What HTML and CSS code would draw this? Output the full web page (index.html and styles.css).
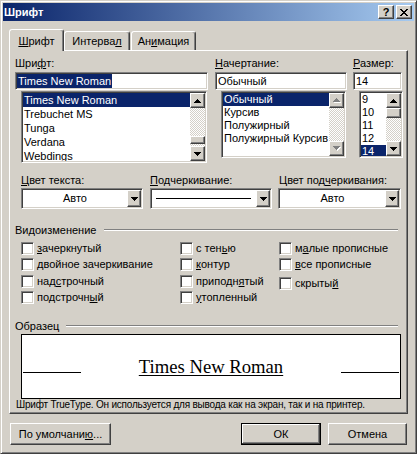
FILE: index.html
```html
<!DOCTYPE html>
<html lang="ru">
<head>
<meta charset="utf-8">
<title>Шрифт</title>
<link rel="stylesheet" href="styles.css">
</head>
<body>
<div class="win">
  <div class="titlebar">
    <span class="title">Шрифт</span>
    <div class="tbtns">
      <span class="tbtn raised">?</span>
      <span class="tbtn raised"><svg width="8" height="7" viewBox="0 0 8 7" shape-rendering="crispEdges"><path d="M0 0h2v1h-2zM6 0h2v1h-2zM1 1h2v1h-2zM5 1h2v1h-2zM2 2h4v1h-4zM3 3h2v1h-2zM2 4h4v1h-4zM1 5h2v1h-2zM5 5h2v1h-2zM0 6h2v1h-2zM6 6h2v1h-2z" fill="#000"/></svg></span>
    </div>
  </div>

  <div class="tabs">
    <div class="tab active"><u>Ш</u>рифт</div>
    <div class="tab t2">Интерва<u>л</u></div>
    <div class="tab t3">Ан<u>и</u>мация</div>
  </div>

  <div class="panel">
    <div class="row1">
      <div class="c1">
        <div class="lbl">Шри<u>ф</u>т:</div>
        <div class="field sunken"><span class="txt hl">Times New Roman</span></div>
        <div class="list sunken list-font">
          <div class="items">
            <div class="item sel">Times New Roman</div>
            <div class="item">Trebuchet MS</div>
            <div class="item">Tunga</div>
            <div class="item">Verdana</div>
            <div class="item">Webdings</div>
          </div>
          <div class="sb">
            <div class="sbtn raised"><svg width="7" height="4" viewBox="0 0 7 4" shape-rendering="crispEdges"><path d="M3 0h1v1h1v1h1v1h1v1h-7v-1h1v-1h1v-1h1z" fill="#000"/></svg></div>
            <div class="track track-end"><div class="thumb raised"></div></div>
            <div class="sbtn raised"><svg width="7" height="4" viewBox="0 0 7 4" shape-rendering="crispEdges"><path d="M0 0h7v1h-1v1h-1v1h-1v1h-1v-1h-1v-1h-1v-1h-1z" fill="#000"/></svg></div>
          </div>
        </div>
      </div>

      <div class="c2">
        <div class="lbl"><u>Н</u>ачертание:</div>
        <div class="field sunken"><span class="txt">Обычный</span></div>
        <div class="list sunken list-small list-style">
          <div class="items">
            <div class="item sel">Обычный</div>
            <div class="item">Курсив</div>
            <div class="item">Полужирный</div>
            <div class="item">Полужирный Курсив</div>
          </div>
          <div class="sb">
            <div class="sbtn raised"><svg width="8" height="5" viewBox="0 0 8 5" shape-rendering="crispEdges"><path d="M4 1h1v1h1v1h1v1h1v1h-7v-1h1v-1h1v-1h1z" fill="#fff"/><path d="M3 0h1v1h1v1h1v1h1v1h-7v-1h1v-1h1v-1h1z" fill="#808080"/></svg></div>
            <div class="track"></div>
            <div class="sbtn raised"><svg width="8" height="5" viewBox="0 0 8 5" shape-rendering="crispEdges"><path d="M1 1h7v1h-1v1h-1v1h-1v1h-1v-1h-1v-1h-1v-1h-1z" fill="#fff"/><path d="M0 0h7v1h-1v1h-1v1h-1v1h-1v-1h-1v-1h-1v-1h-1z" fill="#808080"/></svg></div>
          </div>
        </div>
      </div>

      <div class="c3">
        <div class="lbl"><u>Р</u>азмер:</div>
        <div class="field sunken"><span class="txt">14</span></div>
        <div class="list sunken list-small list-size">
          <div class="items">
            <div class="item">9</div>
            <div class="item">10</div>
            <div class="item">11</div>
            <div class="item">12</div>
            <div class="item sel">14</div>
          </div>
          <div class="sb">
            <div class="sbtn raised"><svg width="7" height="4" viewBox="0 0 7 4" shape-rendering="crispEdges"><path d="M3 0h1v1h1v1h1v1h1v1h-7v-1h1v-1h1v-1h1z" fill="#000"/></svg></div>
            <div class="track"><div class="thumb thumb-top raised"></div></div>
            <div class="sbtn raised"><svg width="7" height="4" viewBox="0 0 7 4" shape-rendering="crispEdges"><path d="M0 0h7v1h-1v1h-1v1h-1v1h-1v-1h-1v-1h-1v-1h-1z" fill="#000"/></svg></div>
          </div>
        </div>
      </div>
    </div>

    <div class="row2">
      <div class="r2c1">
        <div class="lbl"><u>Ц</u>вет текста:</div>
        <div class="combo sunken">
          <div class="val">Авто</div>
          <div class="cbtn raised"><svg width="7" height="4" viewBox="0 0 7 4" shape-rendering="crispEdges"><path d="M0 0h7v1h-1v1h-1v1h-1v1h-1v-1h-1v-1h-1v-1h-1z" fill="#000"/></svg></div>
        </div>
      </div>
      <div class="r2c2">
        <div class="lbl"><u>П</u>одчеркивание:</div>
        <div class="combo sunken">
          <div class="val"><div class="uline"></div></div>
          <div class="cbtn raised"><svg width="7" height="4" viewBox="0 0 7 4" shape-rendering="crispEdges"><path d="M0 0h7v1h-1v1h-1v1h-1v1h-1v-1h-1v-1h-1v-1h-1z" fill="#000"/></svg></div>
        </div>
      </div>
      <div class="r2c3">
        <div class="lbl lbl3">Цвет под<u>ч</u>еркивания:</div>
        <div class="combo sunken">
          <div class="val">Авто</div>
          <div class="cbtn raised"><svg width="7" height="4" viewBox="0 0 7 4" shape-rendering="crispEdges"><path d="M0 0h7v1h-1v1h-1v1h-1v1h-1v-1h-1v-1h-1v-1h-1z" fill="#000"/></svg></div>
        </div>
      </div>
    </div>

    <div class="legend legend-mod"><span>Видоизменение</span><div class="line"></div></div>
    <div class="checks">
      <div class="chk"><span class="cb sunken"></span><span><u>з</u>ачеркнутый</span></div>
      <div class="chk"><span class="cb sunken"></span><span><u>д</u>войное зачеркивание</span></div>
      <div class="chk"><span class="cb sunken"></span><span>над<u>с</u>трочный</span></div>
      <div class="chk"><span class="cb sunken"></span><span>подстрочн<u>ы</u>й</span></div>
      <div class="chk"><span class="cb sunken"></span><span>с тен<u>ь</u>ю</span></div>
      <div class="chk"><span class="cb sunken"></span><span><u>к</u>онтур</span></div>
      <div class="chk"><span class="cb sunken"></span><span>приподн<u>я</u>тый</span></div>
      <div class="chk"><span class="cb sunken"></span><span><u>у</u>топленный</span></div>
      <div class="chk"><span class="cb sunken"></span><span>м<u>а</u>лые прописные</span></div>
      <div class="chk"><span class="cb sunken"></span><span><u>в</u>се прописные</span></div>
      <div class="chk low"><span class="cb sunken"></span><span>скрыты<u>й</u></span></div>
    </div>

    <div class="legend legend-sample"><span>Образец</span><div class="line"></div></div>
    <div class="sample">
      <div class="sline"></div>
      <div class="stext">Times New Roman</div>
      <div class="sline"></div>
    </div>
    <div class="desc">Шрифт TrueType. Он используется для вывода как на экран, так и на принтер.</div>
  </div>

  <div class="btnrow">
    <div class="btn raised b-def">По умолчани<u>ю</u>...</div>
    <div class="btn raised b-ok default">ОК</div>
    <div class="btn raised b-cancel">Отмена</div>
  </div>
</div>
</body>
</html>
```
FILE: styles.css
```css
* { box-sizing: border-box; }
html, body { margin: 0; padding: 0; }
body {
  width: 417px;
  height: 454px;
  overflow: hidden;
  background: #d4d0c8;
  font-family: "Liberation Sans", Arial, sans-serif;
  font-size: 11px;
  line-height: 13px;
  color: #000;
}
u { text-decoration: underline; text-underline-offset: 1px; }

.raised {
  background: #d4d0c8;
  border: 1px solid;
  border-color: #fff #404040 #404040 #fff;
  box-shadow: inset -1px -1px #808080;
}
.sunken {
  background: #fff;
  border: 1px solid;
  border-color: #808080 #fff #fff #808080;
  box-shadow: inset 1px 1px #404040, inset -1px -1px #d4d0c8;
}

.win {
  width: 417px;
  height: 454px;
  border: 1px solid;
  border-color: #d4d0c8 #404040 #404040 #d4d0c8;
  box-shadow: inset 1px 1px #fff, inset -1px -1px #808080;
  padding: 2px;
}

.titlebar {
  height: 18px;
  background: linear-gradient(to right, #0a246a, #a6caf0);
  display: flex;
  align-items: center;
  padding: 0 2px 0 1px;
  color: #fff;
  font-weight: bold;
}
.tbtns { margin-left: auto; display: flex; gap: 2px; }
.tbtn {
  width: 16px;
  height: 14px;
  display: flex;
  align-items: center;
  justify-content: center;
  color: #000;
  font-weight: bold;
  font-size: 11px;
  line-height: 12px;
}

.tabs {
  display: flex;
  align-items: flex-end;
  height: 21px;
  margin: 8px 0 0 6px;
}
.tab {
  height: 19px;
  padding-top: 3px;
  text-align: center;
  border: 1px solid;
  border-bottom: 0;
  border-color: #fff #404040 transparent #fff;
  box-shadow: inset -1px 0 #808080;
  border-radius: 3px 3px 0 0;
  background: #d4d0c8;
}
.tab.active {
  width: 55px;
  height: 22px;
  margin-bottom: -1px;
  padding-top: 5px;
  position: relative;
  z-index: 1;
}
.t2 { width: 66px; }
.t3 { width: 65px; margin-left: 1px; }

.panel {
  margin-left: 6px;
  width: 399px;
  height: 364px;
  border: 1px solid;
  border-color: #fff #404040 #404040 #fff;
  box-shadow: inset -1px -1px #808080;
  padding: 6px 5px 0 5px;
}

.row1 { display: flex; }
.c1 { width: 193px; }
.c2 { width: 132px; margin-left: 7px; }
.c3 { width: 49px; margin-left: 6px; }

.lbl { height: 13px; white-space: nowrap; }
.field {
  height: 18px;
  margin-top: 2px;
  display: flex;
  align-items: center;
  padding-left: 1px;
}
.txt { padding: 0 1px; line-height: 14px; white-space: nowrap; }
.hl { background: #0a246a; color: #fff; }

.list {
  display: flex;
  margin: 1px 1px 0 6px;
  padding: 1px;
  height: 72px;
}
.list-small { height: 67px; }
.list-size { margin-right: -1px; }
.items { flex: 1; min-width: 0; overflow: hidden; }
.item {
  height: 14px;
  line-height: 14px;
  padding-left: 1px;
  white-space: nowrap;
  overflow: hidden;
}
.list-small .item { height: 13px; line-height: 13px; }
.item.sel { background: #0a246a; color: #fff; }

.sb { width: 15px; flex: none; display: flex; flex-direction: column; }
.sbtn {
  height: 15px;
  flex: none;
  display: flex;
  align-items: center;
  justify-content: center;
}
.track {
  flex: 1;
  display: flex;
  flex-direction: column;
  background: repeating-conic-gradient(#fff 0 25%, #d4d0c8 0 50%) 0 0 / 2px 2px;
}
.track-end { justify-content: flex-end; }
.thumb { height: 8px; margin-bottom: 2px; flex: none; }
.thumb-top { height: 10px; margin-bottom: 0; }

.row2 { display: flex; margin: 11px 1px 0 6px; }
.r2c1 { width: 122px; }
.r2c2 { width: 122px; margin-left: 7px; }
.r2c3 { width: 123px; margin-left: 6px; }
.lbl3 { padding-left: 1px; }
.combo {
  height: 21px;
  margin-top: 1px;
  display: flex;
  padding: 1px;
}
.val {
  flex: 1;
  display: flex;
  align-items: center;
  justify-content: center;
}
.uline { flex: 1; height: 1px; background: #000; margin: 0 5px 0 4px; }
.cbtn {
  width: 14px;
  height: 17px;
  flex: none;
  display: flex;
  align-items: center;
  justify-content: center;
}

.legend { display: flex; align-items: center; height: 13px; }
.legend .line {
  flex: 1;
  height: 2px;
  border-top: 1px solid #808080;
  border-bottom: 1px solid #fff;
  margin: -1px 4px 0 8px;
}
.legend-mod { margin-top: 15px; }
.legend-sample { margin-top: 13px; }
.legend-sample .line { margin-left: 7px; }

.checks {
  display: grid;
  grid-template-columns: 159px 99px 1fr;
  grid-template-rows: 16px 17px 16px 16px;
  grid-auto-flow: column;
  margin: 5px 0 0 6px;
}
.chk { display: flex; align-items: flex-start; gap: 3px; white-space: nowrap; }
.chk.low { margin-top: 2px; }
.cb { width: 13px; height: 13px; flex: none; }

.sample {
  margin: 1px 1px 0 6px;
  height: 65px;
  border: 1px solid #000;
  background: #fff;
  display: flex;
  align-items: center;
  justify-content: space-between;
  padding: 0 1px;
}
.sline { width: 58px; height: 1px; background: #000; margin-top: 11px; }
.stext {
  font-family: "Liberation Serif", "Times New Roman", serif;
  font-size: 18.67px;
  line-height: 21px;
  text-decoration: underline;
  text-underline-offset: 2px;
  text-decoration-thickness: 1px;
}
.desc {
  margin-left: 1px;
  font-size: 10px;
  letter-spacing: -0.2px;
  line-height: 12px;
  white-space: nowrap;
}

.btnrow { display: flex; margin: 9px 7px 0 7px; height: 22px; }
.btn {
  height: 22px;
  display: flex;
  align-items: center;
  justify-content: center;
}
.b-def { width: 101px; }
.b-ok { width: 80px; margin-left: auto; }
.b-cancel { width: 79px; margin-left: 7px; }
.btn.default {
  border: 1px solid #000;
  box-shadow: inset -1px -1px #404040, inset 1px 1px #fff, inset -2px -2px #808080;
}
```
